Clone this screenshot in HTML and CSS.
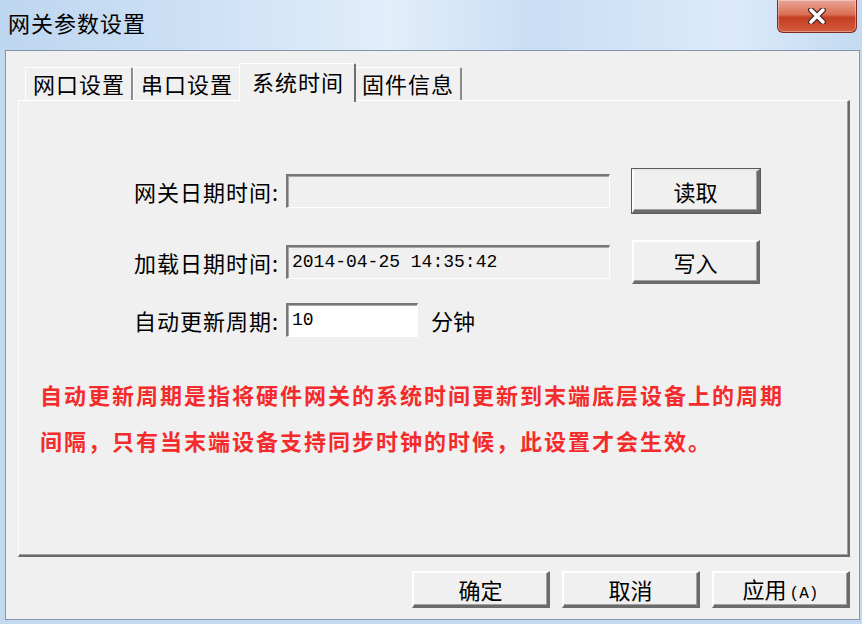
FILE: index.html
```html
<!DOCTYPE html>
<html lang="zh-CN">
<head>
    <meta charset="UTF-8">
    <title>网关参数设置</title>
    <link rel="stylesheet" href="styles.css">
</head>
<body>
    <div class="window">
        <div class="titlebar">
            <span class="title">网关参数设置</span>
            <div class="close-btn">
                <svg width="22" height="16" viewBox="0 0 22 16">
                    <path d="M5 2 L17 14 M17 2 L5 14" stroke="#4a2a24" stroke-width="6" stroke-linecap="round"/>
                    <path d="M5 2 L17 14 M17 2 L5 14" stroke="#ffffff" stroke-width="3.5" stroke-linecap="round"/>
                </svg>
            </div>
        </div>

        <div class="client">
            <div class="tabs">
                <div class="tab">网口设置</div>
                <div class="tab">串口设置</div>
                <div class="tab active">系统时间</div>
                <div class="tab">固件信息</div>
            </div>

            <div class="panel">
                <div class="form">
                    <div class="row">
                        <label class="field-label">网关日期时间:</label>
                        <div class="field readonly"></div>
                        <button class="btn btn-default">读取</button>
                    </div>
                    <div class="row row-second">
                        <label class="field-label">加载日期时间:</label>
                        <div class="field readonly">2014-04-25 14:35:42</div>
                        <button class="btn">写入</button>
                    </div>
                    <div class="row row-third">
                        <label class="field-label">自动更新周期:</label>
                        <div class="field short">10</div>
                        <span class="unit">分钟</span>
                    </div>
                </div>

                <p class="note">自动更新周期是指将硬件网关的系统时间更新到末端底层设备上的周期<br>间隔，只有当末端设备支持同步时钟的时候，此设置才会生效。</p>
            </div>

            <div class="actions">
                <button class="btn btn-wide">确定</button>
                <button class="btn btn-wide">取消</button>
                <button class="btn btn-wide">应用<span class="accel">(A)</span></button>
            </div>
        </div>
    </div>
</body>
</html>
```

FILE: styles.css
```css
body {
    margin: 0;
    width: 862px;
    height: 624px;
    overflow: hidden;
    background: #c2d9f0;
    font-family: "Noto Sans CJK SC", "Noto Sans", sans-serif;
    color: #000;
}
.window {
    height: 624px;
}
.titlebar {
    height: 50px;
    display: flex;
    justify-content: space-between;
    align-items: flex-start;
    background: linear-gradient(to right, #bdd6ef 0%, #cfe2f6 25%, #e2eefa 45%, #c9def4 62%, #dceafa 85%, #c3daf1 100%);
}
.title {
    padding-left: 8px;
    font-size: 22px;
    letter-spacing: 1px;
    line-height: 44px;
}
.close-btn {
    width: 78px;
    height: 32px;
    margin-right: 5px;
    border: 1px solid #7c2c1c;
    border-top: none;
    border-radius: 0 0 6px 6px;
    background: linear-gradient(#eaa697 0%, #db6e55 45%, #c43d22 55%, #d35c3d 100%);
    box-shadow: inset 0 0 0 1px rgba(255,255,255,0.35);
    display: flex;
    justify-content: center;
    align-items: center;
}
.client {
    box-sizing: border-box;
    height: 570px;
    margin: 0 2px 0 5px;
    border: 1px solid #8394a8;
    background: #f0f0f0;
}

/* tabs */
.tabs {
    display: flex;
    align-items: flex-end;
    height: 37px;
    margin: 12px 0 0 12px;
    padding-left: 7px;
}
.tab {
    height: 32px;
    padding: 0 6px 0 7px;
    font-size: 22px;
    letter-spacing: 1px;
    line-height: 31px;
    border-top: 1px solid #fff;
    border-left: 1px solid #fff;
    border-right: 2px solid #8a8a8a;
    border-radius: 2px 2px 0 0;
    background: #f0f0f0;
}
.tab.active {
    position: relative;
    z-index: 1;
    height: 38px;
    margin: 0 -2px -2px -2px;
    padding: 0 10px 0 12px;
    line-height: 34px;
    border-right-color: #6e6e6e;
}

/* panel */
.panel {
    box-sizing: border-box;
    height: 457px;
    margin: 0 9px 0 12px;
    padding-top: 68px;
    border-top: 1px solid #fff;
    border-left: 1px solid #fff;
    border-right: 2px solid #6a6a6a;
    border-bottom: 2px solid #6a6a6a;
    box-shadow: inset -1px -1px 0 #a0a0a0;
}
.row {
    display: flex;
    align-items: center;
    height: 44px;
}
.row-second {
    margin-top: 27px;
}
.row-third {
    margin-top: 19px;
    height: 34px;
}
.field-label {
    box-sizing: border-box;
    width: 267px;
    padding-right: 7px;
    text-align: right;
    font-size: 22px;
    letter-spacing: 1px;
}
.field {
    box-sizing: border-box;
    width: 324px;
    height: 34px;
    padding-left: 4px;
    border-style: solid;
    border-width: 2px 1px 1px 2px;
    border-color: #777 #fff #fff #777;
    box-shadow: inset 1px 1px 0 #a8a8a8;
    font-family: "Liberation Mono", "DejaVu Sans Mono", monospace;
    font-size: 18px;
    line-height: 30px;
    white-space: nowrap;
}
.field.readonly {
    background: #f0f0f0;
}
.field.short {
    width: 132px;
    background: #fff;
}
.unit {
    margin-left: 13px;
    font-size: 22px;
}
.btn {
    box-sizing: border-box;
    width: 128px;
    height: 44px;
    margin-left: 22px;
    padding: 0;
    border-style: solid;
    border-width: 2px 3px 3px 2px;
    border-color: #fff #6b6b6b #6b6b6b #fff;
    box-shadow: inset -1px -1px 0 #a0a0a0;
    background: #f0f0f0;
    font-family: "Noto Sans CJK SC", "Noto Sans", sans-serif;
    font-size: 22px;
    color: #000;
}
.btn-default {
    outline: 1px solid #5a5a5a;
    border-top-color: #e8e8e8;
}
.note {
    margin: 34px 0 0 21px;
    color: #f52a2a;
    font-weight: bold;
    font-size: 22px;
    letter-spacing: 2px;
    line-height: 46px;
}

/* bottom buttons */
.actions {
    display: flex;
    justify-content: flex-end;
    gap: 12px;
    margin-top: 14px;
    padding-right: 9px;
}
.btn-wide {
    width: 138px;
    height: 37px;
    margin-left: 0;
    line-height: 30px;
}
.accel {
    font-family: "Liberation Mono", monospace;
    font-size: 16px;
    margin-left: 3px;
}
```
